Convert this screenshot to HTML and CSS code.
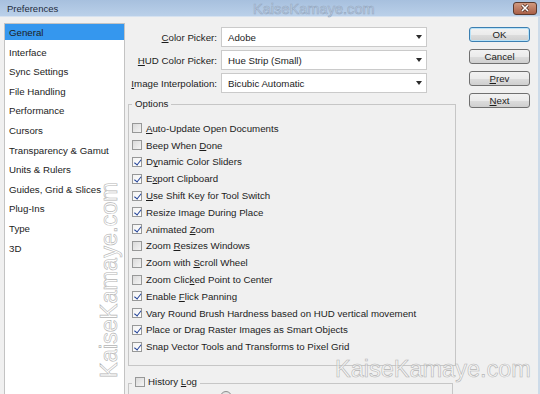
FILE: index.html
```html
<!DOCTYPE html>
<html lang="en">
<head>
  <meta charset="UTF-8" />
  <title>Preferences</title>
  <link rel="stylesheet" href="styles.css">
</head>
<body>
  <div class="window">
    <div class="titlebar">
      <span class="title">Preferences</span>
      <span class="close">
        <svg width="10" height="8" viewBox="0 0 10 8"><path d="M2 1 L8 7 M8 1 L2 7" stroke="#4a2a20" stroke-width="3"/><path d="M2 1 L8 7 M8 1 L2 7" stroke="#fff" stroke-width="1.6"/></svg>
      </span>
    </div>
    <div class="frame">
      <ul class="nav">
        <li class="selected">General</li>
        <li>Interface</li>
        <li>Sync Settings</li>
        <li>File Handling</li>
        <li>Performance</li>
        <li>Cursors</li>
        <li>Transparency &amp; Gamut</li>
        <li>Units &amp; Rulers</li>
        <li>Guides, Grid &amp; Slices</li>
        <li>Plug-Ins</li>
        <li>Type</li>
        <li>3D</li>
      </ul>

      <div class="main">
        <div class="field">
          <label><u>C</u>olor Picker:</label>
          <div class="select"><span>Adobe</span><i class="arrow"></i></div>
        </div>
        <div class="field">
          <label><u>H</u>UD Color Picker:</label>
          <div class="select"><span>Hue Strip (Small)</span><i class="arrow"></i></div>
        </div>
        <div class="field">
          <label><u>I</u>mage Interpolation:</label>
          <div class="select"><span>Bicubic Automatic</span><i class="arrow"></i></div>
        </div>

        <fieldset class="group options">
          <legend>Options</legend>
          <div class="check"><span class="box"></span><span><u>A</u>uto-Update Open Documents</span></div>
          <div class="check"><span class="box"></span><span>Beep When <u>D</u>one</span></div>
          <div class="check"><span class="box on"></span><span>D<u>y</u>namic Color Sliders</span></div>
          <div class="check"><span class="box on"></span><span>E<u>x</u>port Clipboard</span></div>
          <div class="check"><span class="box on"></span><span><u>U</u>se Shift Key for Tool Switch</span></div>
          <div class="check"><span class="box on"></span><span>Resize Image During Place</span></div>
          <div class="check"><span class="box on"></span><span>Animated <u>Z</u>oom</span></div>
          <div class="check"><span class="box"></span><span>Zoom <u>R</u>esizes Windows</span></div>
          <div class="check"><span class="box"></span><span>Zoom with <u>S</u>croll Wheel</span></div>
          <div class="check"><span class="box"></span><span>Zoom Clic<u>k</u>ed Point to Center</span></div>
          <div class="check"><span class="box on"></span><span>Enable <u>F</u>lick Panning</span></div>
          <div class="check"><span class="box on"></span><span>Vary Round Brush Hardness based on HUD vertical movement</span></div>
          <div class="check"><span class="box on"></span><span>Place or Drag Raster Images as Smart Objects</span></div>
          <div class="check"><span class="box on"></span><span>Snap Vector Tools and Transforms to Pixel Grid</span></div>
        </fieldset>

        <fieldset class="group history">
          <legend><span class="check-inline"><span class="box"></span><span>History <u>L</u>og</span></span></legend>
          <div class="radio-row"><span class="radio"></span><span>Metadata</span></div>
        </fieldset>
      </div>

      <div class="buttons">
        <button class="default">OK</button>
        <button>Cancel</button>
        <button><u>P</u>rev</button>
        <button><u>N</u>ext</button>
      </div>
    </div>

    <div class="wm wm-title">KaiseKamaye.com</div>
    <div class="wm wm-side">KaiseKamaye.com</div>
    <div class="wm wm-corner">KaiseKamaye.com</div>
  </div>
</body>
</html>
```

FILE: styles.css
```css
* {
  box-sizing: border-box;
}
html, body {
  margin: 0;
  height: 100%;
  overflow: hidden;
}
body {
  font-family: "Liberation Sans", Arial, sans-serif;
  font-size: 9.7px;
  color: #1c1c1c;
  background: #f0f0f0;
}
u {
  text-decoration-thickness: 1px;
  text-underline-offset: 1px;
}
.window {
  position: relative;
  width: 540px;
  height: 394px;
  background: #f0f0f0;
  overflow: hidden;
}

/* title bar */
.titlebar {
  height: 17px;
  display: flex;
  align-items: center;
  justify-content: space-between;
  padding: 0 3px 0 7px;
  background: linear-gradient(#a7c0de, #bad0e9);
  border-bottom: 1px solid #d6e2f0;
}
.title {
  font-size: 9.5px;
  color: #1e2b3c;
}
.close {
  width: 24px;
  height: 13px;
  display: flex;
  align-items: center;
  justify-content: center;
  border: 1px solid #5b3a2e;
  border-radius: 3px;
  background: linear-gradient(#d19a80, #a95f47);
}

/* body of the dialog */
.frame {
  display: flex;
  align-items: stretch;
  height: 390px;
  padding: 6px 0 0 4px;
  border-right: 2px solid #cddbe9;
}
.nav {
  width: 121px;
  margin: 0;
  padding: 0;
  list-style: none;
  background: #fff;
  border: 1px solid #c3c3c3;
}
.nav li {
  height: 16px;
  line-height: 17px;
  padding-left: 4px;
  margin-bottom: 3.6px;
  white-space: nowrap;
}
.nav li.selected {
  background: #3597ee;
}

.main {
  width: 328px;
  margin-left: 3px;
  padding-top: 4px;
}
.field {
  display: flex;
  align-items: center;
  height: 20px;
  margin-bottom: 3px;
}
.field label {
  width: 89px;
  margin-right: 4px;
  text-align: right;
  white-space: nowrap;
}
.select {
  width: 206px;
  height: 20px;
  display: flex;
  align-items: center;
  justify-content: space-between;
  padding: 0 4px 0 6px;
  background: #fff;
  border: 1px solid #cacaca;
}
.arrow {
  width: 0;
  height: 0;
  border-left: 3.5px solid transparent;
  border-right: 3.5px solid transparent;
  border-top: 4px solid #2b2b2b;
}

/* group boxes */
.group {
  margin: 5px 0 0;
  min-width: 0;
  border: 1px solid #c6c6c6;
}
.group legend {
  padding: 0 3px;
  line-height: 12px;
}
.options {
  width: 328px;
  padding: 10px 3px 10px;
}
.history {
  width: 325px;
  margin-top: 10px;
  padding: 1px 3px 0;
}
.check {
  display: flex;
  align-items: center;
  height: 16.8px;
  white-space: nowrap;
}
.check-inline {
  display: inline-flex;
  align-items: center;
}
.box {
  position: relative;
  flex: none;
  width: 10px;
  height: 10px;
  margin-right: 4px;
  border: 1px solid #979898;
  background: linear-gradient(135deg, #dadada, #f4f4f4);
}
.check-inline .box {
  margin-right: 3px;
}
.box.on {
  background: linear-gradient(135deg, #f2f2f2, #ffffff);
}
.box.on::after {
  content: "";
  position: absolute;
  left: 2.5px;
  top: 0;
  width: 2.5px;
  height: 5.5px;
  border: solid #24449a;
  border-width: 0 1.6px 1.6px 0;
  transform: rotate(38deg);
}
.radio-row {
  display: flex;
  align-items: center;
  padding-left: 88px;
}
.radio {
  width: 12px;
  height: 12px;
  margin-right: 4px;
  border: 1px solid #8e8f8f;
  border-radius: 50%;
  background: radial-gradient(#f4f4f4, #d8d8d8);
}

/* buttons */
.buttons {
  display: flex;
  flex-direction: column;
  gap: 7px;
  margin-left: 13px;
  padding-top: 4px;
}
.buttons button {
  width: 61px;
  height: 15px;
  padding: 0;
  font: inherit;
  line-height: 13px;
  color: #1c1c1c;
  border: 1px solid #707070;
  border-radius: 3px;
  background: linear-gradient(#f2f2f2 0%, #ebebeb 50%, #dddddd 51%, #cfcfcf 100%);
}
.buttons button.default {
  border-color: #3c7fb1;
  box-shadow: inset 0 0 0 1px #b8e2f8;
}

/* watermark text over the screenshot */
.wm {
  position: absolute;
  font-family: "Liberation Sans", Arial, sans-serif;
  line-height: 1;
  white-space: nowrap;
  color: rgba(255, 255, 255, 0.5);
  -webkit-text-stroke: 0.6px #b4b4b4;
  pointer-events: none;
}
.wm-title {
  left: 253px;
  top: 2px;
  font-size: 14.6px;
  color: #c3d4e9;
  -webkit-text-stroke-color: #94a8c1;
}
.wm-side {
  left: 98px;
  top: 378px;
  font-size: 23.5px;
  transform-origin: 0 0;
  transform: rotate(-90deg);
}
.wm-corner {
  left: 335px;
  top: 358px;
  font-size: 23.5px;
}
```
